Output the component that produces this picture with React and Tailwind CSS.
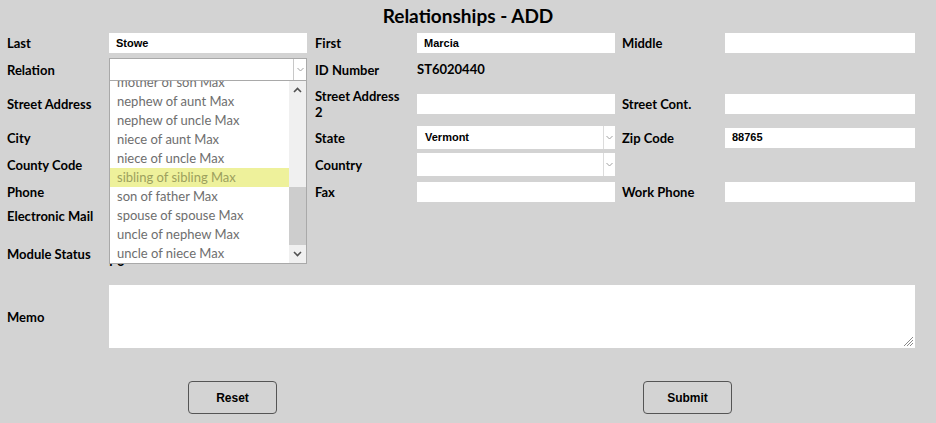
import React from "react";

const Label = ({ children, w = "w-[102px]", inner = "" }) => (
  <div className={`${w} shrink-0 text-[13px] font-bold text-black leading-[16px]`}>
    <div className={inner}>{children}</div>
  </div>
);

const Input = ({ value = "", w = "w-[198px]", h = "h-[20px]" }) => (
  <div className={`${w} ${h} shrink-0 bg-white flex items-center pl-[7px] font-['Liberation_Sans',Arial,sans-serif] text-[11px] font-bold text-black`}>
    {value}
  </div>
);

const Chevron = ({ className = "", color = "#a0a0a0" }) => (
  <svg width="7" height="5" viewBox="0 0 7 5" className={className}>
    <path d="M0.5 1 L3.5 4 L6.5 1" fill="none" stroke={color} strokeWidth="1" />
  </svg>
);

const Select = ({ value = "" }) => (
  <div className="w-[198px] h-[23px] shrink-0 bg-white flex">
    <div className="flex-1 flex items-center pl-[8px] font-['Liberation_Sans',Arial,sans-serif] text-[11px] font-bold text-black">
      {value}
    </div>
    <div className="w-[12px] border-l border-[#dcdcdc] flex items-center justify-center">
      <Chevron />
    </div>
  </div>
);

const options = [
  "mother of son Max",
  "nephew of aunt Max",
  "nephew of uncle Max",
  "niece of aunt Max",
  "niece of uncle Max",
  "sibling of sibling Max",
  "son of father Max",
  "spouse of spouse Max",
  "uncle of nephew Max",
  "uncle of niece Max",
];

export default function App() {
  return (
    <div className="relative w-[936px] h-[423px] bg-[#d3d3d3] overflow-hidden font-['Lato','Open_Sans',sans-serif] text-black">
      <h1 className="h-[33px] pt-[4px] text-center text-[19px] font-bold leading-[24px]">Relationships - ADD</h1>

      <div className="flex flex-col pl-[7px]">
        {/* Row 1 */}
        <div className="flex items-center h-[20px]">
          <Label>Last</Label>
          <Input value="Stowe" />
          <div className="w-[8px]" />
          <Label>First</Label>
          <Input value="Marcia" />
          <div className="w-[7px]" />
          <Label w="w-[103px]">Middle</Label>
          <Input w="w-[190px]" />
        </div>

        {/* Row 2 */}
        <div className="flex items-center h-[23px] mt-[5px]">
          <Label>Relation</Label>
          <div className="w-[198px] h-[23px] shrink-0 bg-white border border-[#a9a9a9] flex">
            <div className="flex-1" />
            <div className="w-[13px] border-l border-[#c8c8c8] flex items-center justify-center">
              <Chevron />
            </div>
          </div>
          <div className="w-[8px]" />
          <Label>ID Number</Label>
          <div className="text-[13px] font-bold">ST6020440</div>
        </div>

        {/* Row 3 */}
        <div className="flex items-center h-[31px] mt-[7px]">
          <Label>Street Address</Label>
          <div className="w-[198px] shrink-0" />
          <div className="w-[8px]" />
          <Label inner="w-[92px]">Street Address 2</Label>
          <Input />
          <div className="w-[7px]" />
          <Label w="w-[103px]">Street Cont.</Label>
          <Input w="w-[190px]" />
        </div>

        {/* Row 4 */}
        <div className="flex items-center h-[23px] mt-[7px]">
          <Label>City</Label>
          <div className="w-[198px] shrink-0" />
          <div className="w-[8px]" />
          <Label>State</Label>
          <Select value="Vermont" />
          <div className="w-[7px]" />
          <Label w="w-[103px]">Zip Code</Label>
          <Input w="w-[190px]" value="88765" />
        </div>

        {/* Row 5 */}
        <div className="flex items-center h-[23px] mt-[4px]">
          <Label>County Code</Label>
          <div className="w-[198px] shrink-0" />
          <div className="w-[8px]" />
          <Label>Country</Label>
          <Select />
        </div>

        {/* Row 6 */}
        <div className="flex items-center h-[20px] mt-[6px]">
          <Label>Phone</Label>
          <div className="w-[198px] shrink-0" />
          <div className="w-[8px]" />
          <Label>Fax</Label>
          <Input />
          <div className="w-[7px]" />
          <Label w="w-[103px]">Work Phone</Label>
          <Input w="w-[190px]" />
        </div>

        {/* Row 7 */}
        <div className="flex items-center h-[20px] mt-[4px]">
          <Label>Electronic Mail</Label>
        </div>

        {/* Row 8 */}
        <div className="flex items-start h-[36px] mt-[20px]">
          <Label>Module Status</Label>
          <div className="text-[13px] font-bold leading-[16px] pt-[7px]">P3</div>
        </div>

        {/* Memo */}
        <div className="flex items-center h-[63px] mt-[3px]">
          <Label>Memo</Label>
          <div className="relative w-[806px] h-[63px] bg-white">
            <svg width="12" height="12" viewBox="0 0 12 12" className="absolute right-[1px] bottom-[1px]">
              <path d="M11 2 L2 11 M11 5 L5 11 M11 8 L8 11" stroke="#8a8a8a" strokeWidth="1" />
            </svg>
          </div>
        </div>

        {/* Buttons */}
        <div className="flex mt-[33px] pl-[181px] gap-[366px]">
          <button className="w-[89px] h-[33px] rounded-[4px] border border-[#555] text-[12px] font-bold font-['Liberation_Sans',Arial,sans-serif]">
            Reset
          </button>
          <button className="w-[89px] h-[33px] rounded-[4px] border border-[#555] text-[12px] font-bold font-['Liberation_Sans',Arial,sans-serif]">
            Submit
          </button>
        </div>
      </div>

      {/* Dropdown list */}
      <div className="absolute left-[109px] top-[81px] w-[198px] h-[183px] bg-white border border-t-0 border-[#a9a9a9] overflow-hidden">
        <div className="absolute left-0 right-[17px] top-[-8px]">
          {options.map((o) => (
            <div
              key={o}
              className={`h-[19px] flex items-center pl-[7px] text-[13px] ${
                o === "sibling of sibling Max" ? "bg-[#eef19b] text-[#9ca05e]" : "text-[#6e6e6e]"
              }`}
            >
              {o}
            </div>
          ))}
        </div>
        <div className="absolute right-0 top-0 bottom-0 w-[17px] bg-[#f0f0f0]">
          <div className="absolute left-0 right-0 top-[106px] h-[58px] bg-[#cdcdcd]" />
          <svg width="9" height="6" viewBox="0 0 9 6" className="absolute left-[4px] top-[6px]">
            <path d="M1 5 L4.5 1.5 L8 5" fill="none" stroke="#505050" strokeWidth="1.6" />
          </svg>
          <svg width="9" height="6" viewBox="0 0 9 6" className="absolute left-[4px] bottom-[6px]">
            <path d="M1 1 L4.5 4.5 L8 1" fill="none" stroke="#505050" strokeWidth="1.6" />
          </svg>
        </div>
      </div>
    </div>
  );
}
